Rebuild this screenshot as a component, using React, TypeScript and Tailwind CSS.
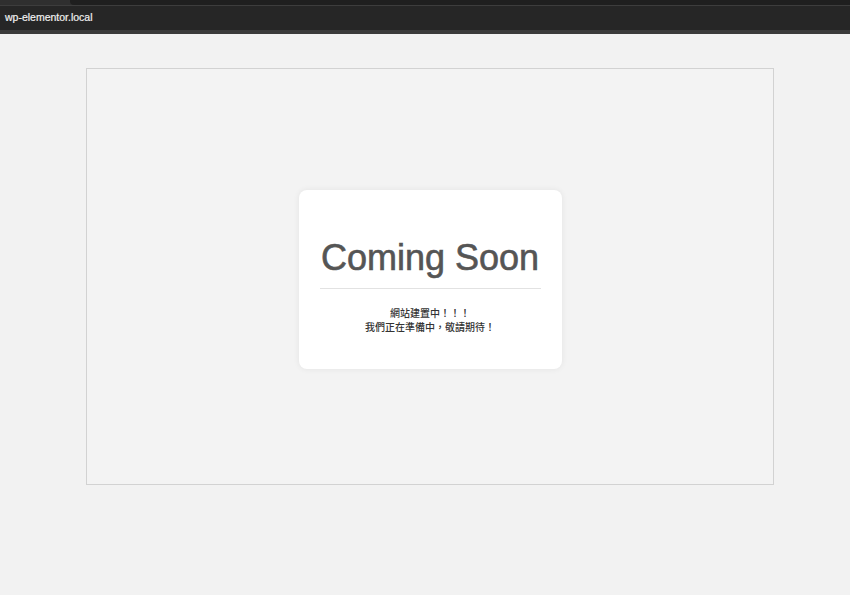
export default function App() {
  return (
    <div className="h-[595px] w-[850px] overflow-hidden bg-[#f2f2f2] font-['Liberation_Sans','Noto_Sans_CJK_TC',sans-serif]">
      {/* browser chrome */}
      <div className="flex h-[5px] bg-[#2f2f2f]">
        <div className="ml-[70px] flex-1 rounded-bl-[4px] bg-[#1f1f1f]" />
      </div>
      <div className="h-px bg-[#3d3d3d]" />
      <div className="flex h-[24px] items-center bg-[#262626] px-[5px]">
        <span className="text-[10.5px] text-[#f0f0f0] [-webkit-text-stroke:0.2px_#f0f0f0]">wp-elementor.local</span>
      </div>
      <div className="h-[4px] bg-[#3b3b3b]" />

      <main className="pt-[34px] pl-[86px]">
        <div className="flex h-[417px] w-[688px] items-center justify-center border border-[#d2d2d2] bg-[#f3f3f3] pt-[5px]">
          <div className="w-[263px] rounded-[8px] bg-white px-[21px] pt-[46px] pb-[35px] text-center shadow-[0_0_6px_rgba(0,0,0,0.07)]">
            <h1 className="text-[36px] leading-[43px] text-[#555555] [-webkit-text-stroke:0.6px_#555555]">Coming Soon</h1>
            <div className="mt-[9px] h-px bg-[#e2e2e2]" />
            <div className="mt-[17px] font-['Noto_Sans_CJK_TC',sans-serif] text-[10px] font-medium leading-[14px] text-[#333333]">
              <p>網站建置中！！！</p>
              <p>我們正在準備中，敬請期待！</p>
            </div>
          </div>
        </div>
      </main>
    </div>
  )
}
